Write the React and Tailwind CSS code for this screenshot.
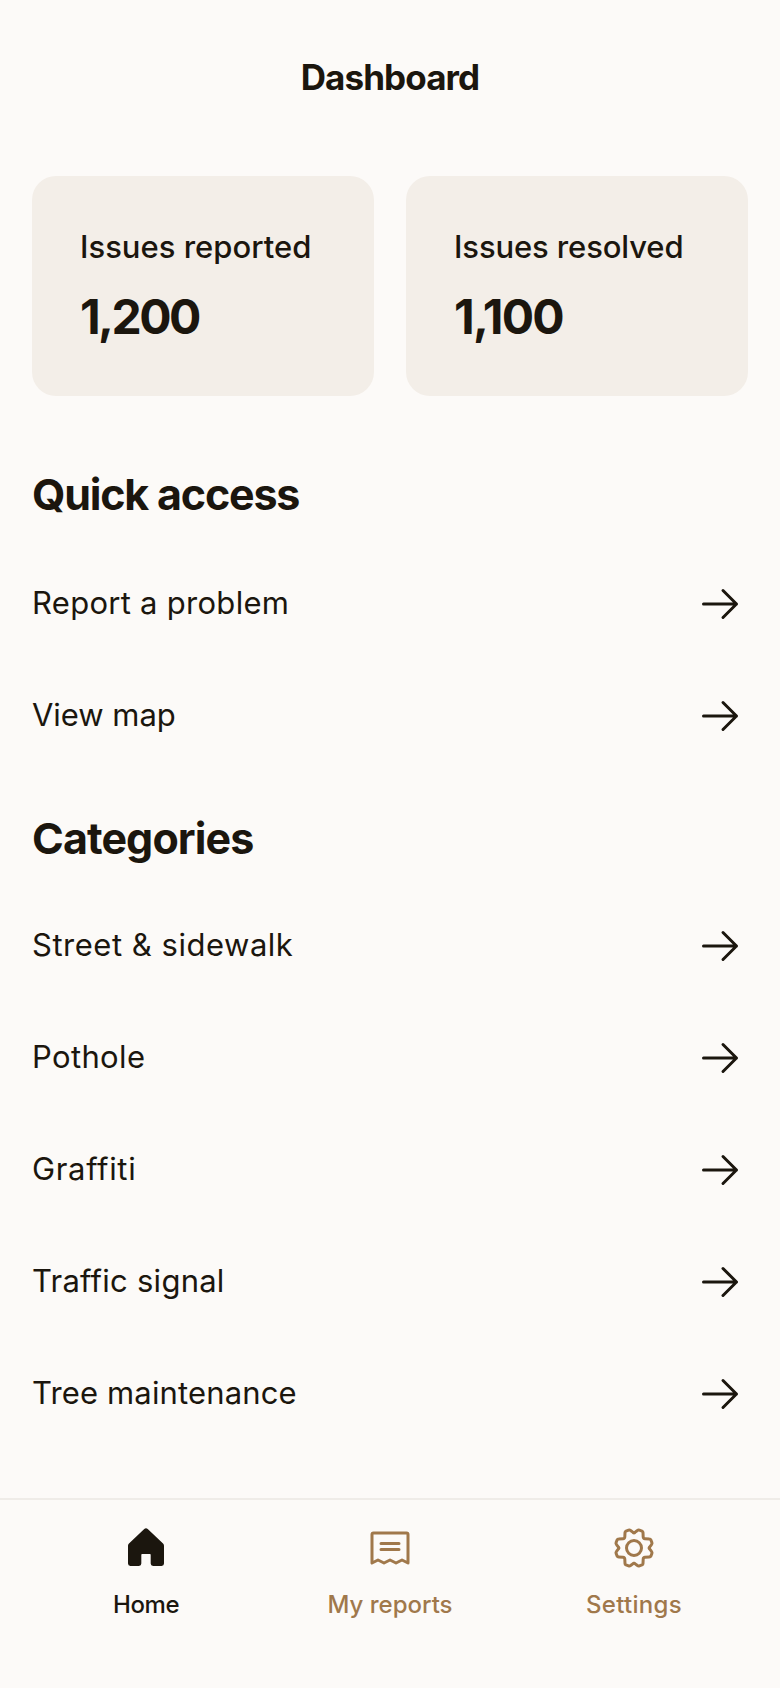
const quickAccess = [
  { label: "Report a problem", fit: "tracking-[0.28px]" },
  { label: "View map", fit: "tracking-[-0.04px]" },
];

const categories = [
  { label: "Street & sidewalk", fit: "tracking-[0.52px]" },
  { label: "Pothole", fit: "tracking-[0.35px]" },
  { label: "Graffiti", fit: "tracking-[0.65px]" },
  { label: "Traffic signal", fit: "tracking-[0.25px]" },
  { label: "Tree maintenance", fit: "tracking-[0.15px]" },
];

function ArrowIcon() {
  return (
    <svg className="size-12 shrink-0" viewBox="0 0 256 256" fill="none" stroke="currentColor" strokeWidth="16" strokeLinecap="round" strokeLinejoin="round">
      <path d="M40 128H216M144 56L216 128L144 200" />
    </svg>
  );
}

function HomeIcon() {
  return (
    <svg className="size-12" viewBox="0 0 256 256" fill="currentColor">
      <path d="M224 115.5V211a13 13 0 0 1-13 13H166a13 13 0 0 1-13-13V164a4 4 0 0 0-4-4H107a4 4 0 0 0-4 4v47a13 13 0 0 1-13 13H45a13 13 0 0 1-13-13V115.5a16 16 0 0 1 5.2-11.8l81.5-76.5a14 14 0 0 1 18.6 0l81.5 76.5a16 16 0 0 1 5.2 11.8Z" />
    </svg>
  );
}

function ReceiptIcon() {
  return (
    <svg className="size-12" viewBox="0 0 256 256" fill="none" stroke="currentColor" strokeWidth="16" strokeLinecap="round" strokeLinejoin="round">
      <path d="M32 208V56a8 8 0 0 1 8-8H216a8 8 0 0 1 8 8V208l-32-16-32 16-32-16-32 16-32-16Z" />
      <path d="M80 104H176M80 136H176" />
    </svg>
  );
}

function GearIcon() {
  const quarter = "M0 -15.2Q.5 -15.2 .9 -15.6L3.4 -17.5Q4.3 -18.3 5.4 -17.9L8 -16.9Q9 -16.4 9 -15.4L9.2 -11Q9.3 -9.3 11 -9.2L15.4 -9Q16.4 -9 16.9 -8L17.9 -5.4Q18.3 -4.3 17.5 -3.4L15.6 -.9Q15.2 -.5 15.2 0";
  return (
    <svg className="size-12" viewBox="-24 -24 48 48" fill="none" stroke="currentColor" strokeWidth="3" strokeLinecap="round" strokeLinejoin="round">
      <circle r="7.5" />
      <path d={quarter} />
      <path d={quarter} transform="rotate(90)" />
      <path d={quarter} transform="rotate(180)" />
      <path d={quarter} transform="rotate(270)" />
    </svg>
  );
}

function StatCard({ label, value, labelFit, valueFit }) {
  return (
    <div className="flex h-[220px] flex-1 flex-col gap-4 rounded-3xl bg-[#f3eee8] px-12 pt-[47px]">
      <p className={`text-[31px] leading-[48px] font-medium whitespace-nowrap ${labelFit}`}>{label}</p>
      <p className={`text-[48px] leading-[60px] font-bold ${valueFit}`}>{value}</p>
    </div>
  );
}

function SectionTitle({ children, fit }) {
  return <h2 className={`px-8 pt-[39px] text-[43px] leading-[55px] font-bold ${fit}`}>{children}</h2>;
}

function LinkRow({ label, fit }) {
  return (
    <a href="#" className="flex h-28 items-center justify-between pr-9 pl-8">
      <span className={`pb-0.5 text-[31px] leading-[48px] ${fit}`}>{label}</span>
      <ArrowIcon />
    </a>
  );
}

function NavItem({ icon, label, color, fit }) {
  return (
    <a href="#" className={`flex flex-1 flex-col items-center gap-[15px] ${color}`}>
      {icon}
      <span className={`text-[24px] leading-9 font-medium ${fit}`}>{label}</span>
    </a>
  );
}

export default function App() {
  return (
    <div className="flex h-[1688px] w-[780px] flex-col bg-[#fcfaf8] font-['Inter','Liberation_Sans',sans-serif] text-[#1b160e]">
      <header className="flex h-36 items-center justify-center pt-2.5">
        <h1 className="text-[35px] leading-[45px] font-bold tracking-[-0.9px]">Dashboard</h1>
      </header>
      <main className="flex-1">
        <div className="flex gap-8 p-8">
          <StatCard label="Issues reported" value="1,200" labelFit="tracking-[0px]" valueFit="tracking-[-2.6px]" />
          <StatCard label="Issues resolved" value="1,100" labelFit="tracking-[-0.12px]" valueFit="tracking-[-1.8px]" />
        </div>
        <SectionTitle fit="pb-[26px] tracking-[-1.2px]">Quick access</SectionTitle>
        {quickAccess.map((item) => (
          <LinkRow key={item.label} {...item} />
        ))}
        <SectionTitle fit="pb-6 tracking-[-0.9px]">Categories</SectionTitle>
        {categories.map((item) => (
          <LinkRow key={item.label} {...item} />
        ))}
      </main>
      <nav className="flex h-[190px] gap-4 border-t-2 border-[#efece8] px-8 pt-6">
        <NavItem icon={<HomeIcon />} label="Home" color="text-[#1b160e]" fit="tracking-[-0.4px]" />
        <NavItem icon={<ReceiptIcon />} label="My reports" color="text-[#a0784b]" fit="tracking-[0px]" />
        <NavItem icon={<GearIcon />} label="Settings" color="text-[#a0784b]" fit="tracking-[0.3px]" />
      </nav>
    </div>
  );
}
